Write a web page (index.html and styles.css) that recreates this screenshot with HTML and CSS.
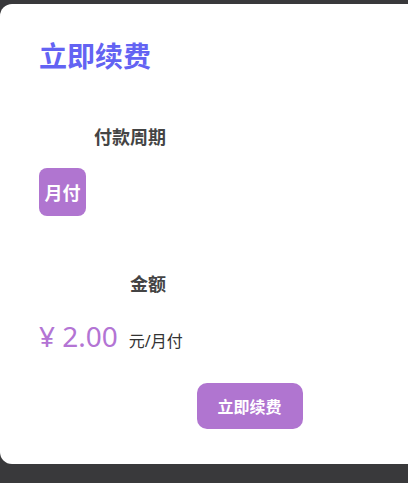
FILE: index.html
```html
<!DOCTYPE html>
<html lang="zh-CN">
<head>
    <meta charset="UTF-8">
    <meta name="viewport" content="width=device-width, initial-scale=1.0">
    <title>立即续费</title>
    <link rel="stylesheet" href="styles.css">
</head>
<body>
    <div class="dialog">
        <h2 class="dialog-title">立即续费</h2>
        <!-- 付款周期 -->
        <div class="field-label">付款周期</div>
        <div class="period-list">
            <button class="period-btn active">月付</button>
        </div>
        <!-- 金额 -->
        <div class="field-label amount-label">金额</div>
        <div class="price-row">
            <span class="price">¥ 2.00</span>
            <span class="unit">元/月付</span>
        </div>
        <div class="dialog-footer">
            <button class="renew-btn">立即续费</button>
        </div>
    </div>
</body>
</html>
```

FILE: styles.css
```css
html, body {
    margin: 0;
    height: 100%;
}
body {
    background-color: #39393b;
    overflow: hidden;
    font-family: "Noto Sans", "Noto Sans CJK SC", sans-serif;
}
.dialog {
    box-sizing: border-box;
    width: 500px;
    height: 460px;
    margin-top: 4px;
    padding: 32px 40px 0 39px;
    background-color: #fff;
    border-radius: 12px;
}
.dialog-title {
    margin: 0;
    font-size: 28px;
    line-height: 40px;
    font-weight: bold;
    color: #6363f3;
}
.field-label {
    width: 127px;
    margin-top: 49px;
    text-align: right;
    font-size: 18px;
    line-height: 24px;
    font-weight: bold;
    color: #444;
}
.period-list {
    display: flex;
    margin-top: 19px;
}
.period-btn {
    width: 47px;
    height: 48px;
    padding: 0;
    border: none;
    border-radius: 8px;
    background-color: #b075d0;
    color: #fff;
    font-family: inherit;
    font-size: 18px;
    font-weight: bold;
    cursor: pointer;
}
.amount-label {
    margin-top: 56px;
}
.price-row {
    display: flex;
    align-items: baseline;
    gap: 11px;
    margin-top: 20px;
    line-height: 40px;
}
.price {
    font-size: 28px;
    color: #b374d4;
}
.unit {
    font-size: 16px;
    color: #333;
}
.dialog-footer {
    display: flex;
    justify-content: center;
    margin-top: 22px;
}
.renew-btn {
    width: 106px;
    height: 46px;
    padding: 0;
    border: none;
    border-radius: 10px;
    background-color: #b075d0;
    color: #fff;
    font-family: inherit;
    font-size: 16px;
    font-weight: bold;
    cursor: pointer;
}
.renew-btn:hover {
    background-color: #a565c6;
}
```
